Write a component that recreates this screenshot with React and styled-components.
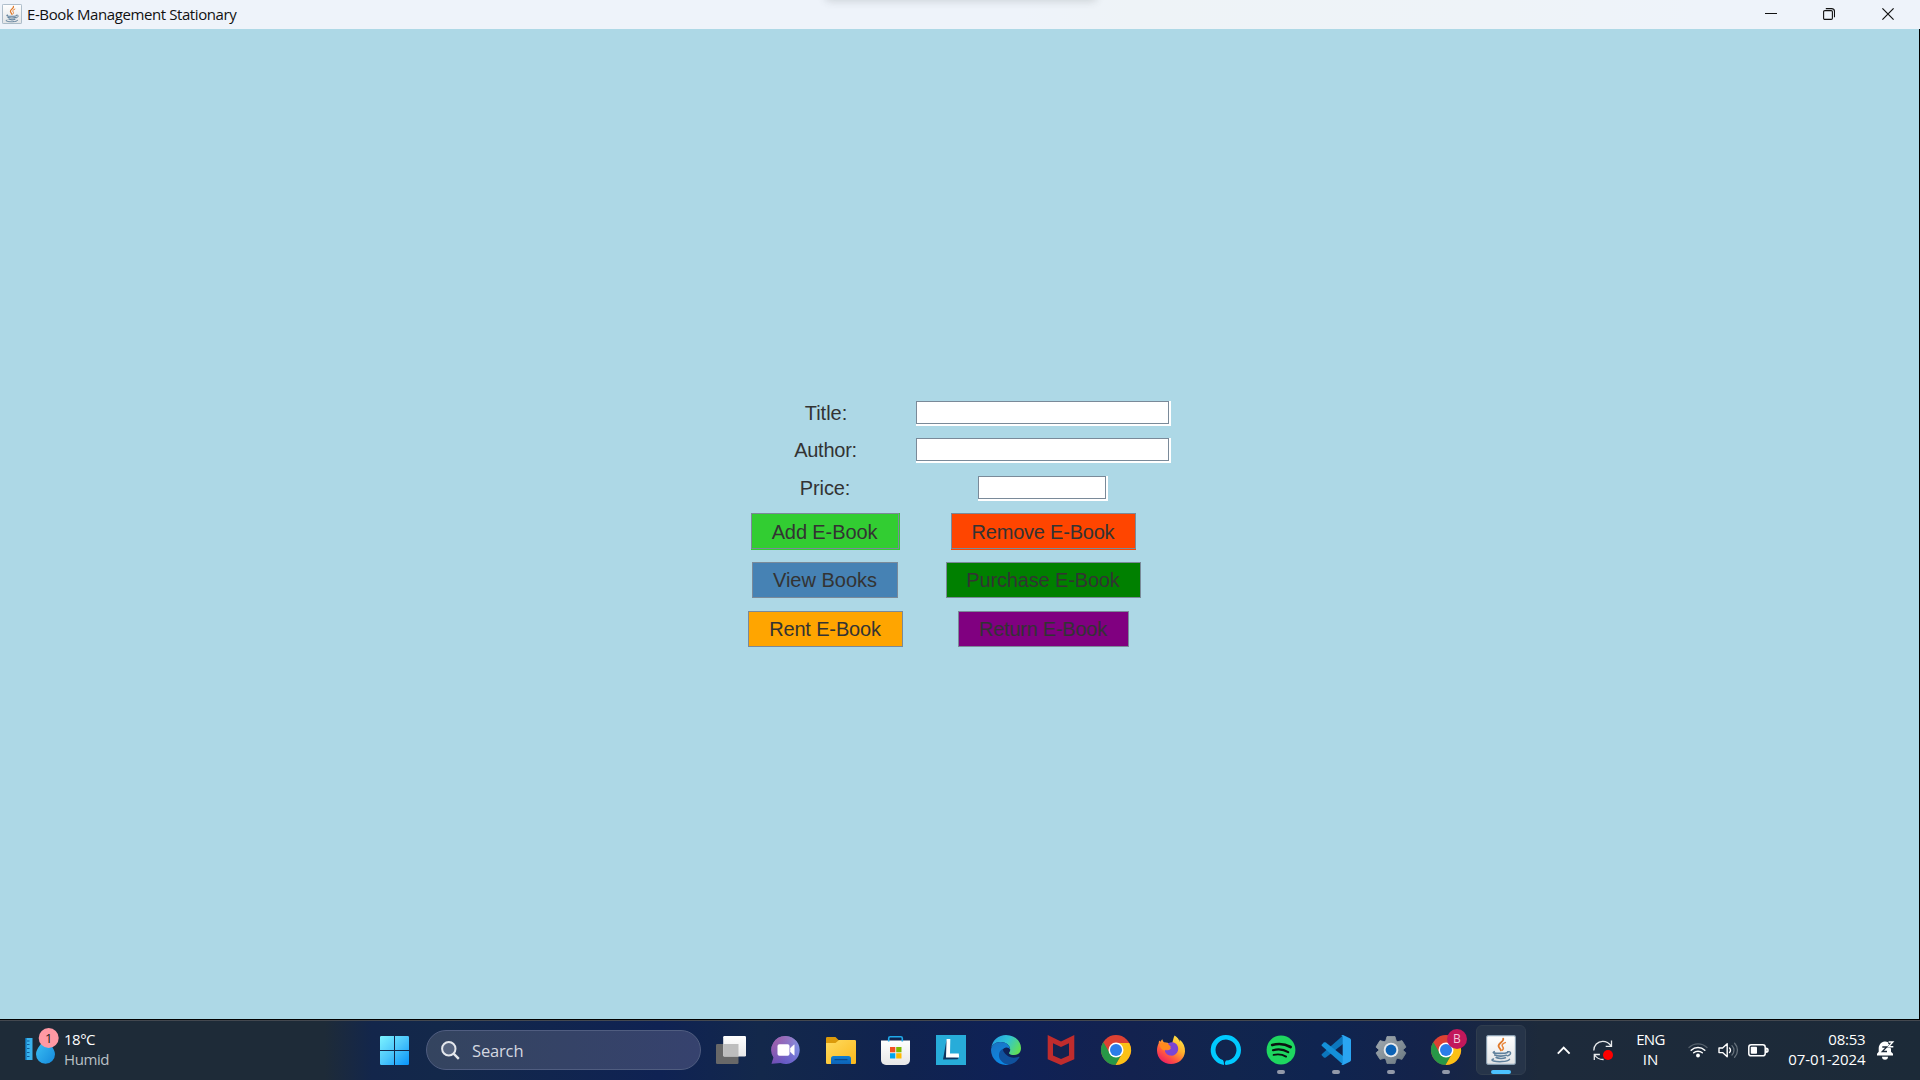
import React from "react";
import styled, { createGlobalStyle } from "styled-components";

const GlobalStyle = createGlobalStyle`
  * { box-sizing: border-box; }
  body { margin: 0; overflow: hidden; background: #000; }
`;

const Screen = styled.div`
  display: flex;
  flex-direction: column;
  width: 1920px;
  height: 1080px;
  font-family: "Open Sans", "Noto Sans", sans-serif;
`;

/* ---------- window ---------- */
const TitleBar = styled.header`
  position: relative;
  overflow: hidden;
  display: flex;
  align-items: center;
  height: 29px;
  flex: none;
  padding: 0 3px 0 2px;
  background: linear-gradient(90deg, #eef3fa 0, #eef3fa 1020px, #eef3f7 1130px, #eef3f8 1500px, #eef3fa 1700px);
`;
const DockShade = styled.div`
  position: absolute;
  left: 826px;
  top: -9px;
  width: 270px;
  height: 9px;
  border-radius: 6px;
  box-shadow: 0 0 9px 1px rgba(60, 70, 70, 0.2);
`;
const AppIcon = styled.svg`
  width: 20px;
  height: 20px;
  margin-bottom: 2px;
`;
const WindowTitle = styled.span`
  margin: 0 auto 1px 5px;
  font-size: 15px;
  line-height: 22px;
  letter-spacing: ${(p) => p.$track};
  white-space: nowrap;
  color: #111;
`;
const WindowButton = styled.button`
  display: flex;
  align-items: center;
  justify-content: center;
  width: 58.5px;
  height: 29px;
  padding: 0 0 1px;
  border: 0;
  background: none;
`;
const ContentPane = styled.main`
  display: flex;
  justify-content: center;
  flex: none;
  width: 1919px;
  height: 990px;
  padding-top: 372px;
  background: #add8e6;
`;
const Form = styled.form`
  display: grid;
  grid-template-columns: 155px 255px;
  grid-template-rows: 37px 38px 37px 49px 49px 36px;
  column-gap: 13px;
  align-items: start;
  justify-items: center;
  height: 246px;
  font-family: "Liberation Sans", Arial, sans-serif;
  font-size: 20px;
  color: #333;
  margin-right: 1px;
`;
const Label = styled.label`
  line-height: 24px;
  padding-left: ${(p) => p.$inset || 0}px;
  letter-spacing: ${(p) => p.$track || "0"};
`;
const FieldFrame = styled.div`
  width: ${(p) => p.$width}px;
  height: 25px;
  border: solid #fff;
  border-width: 0 2px 2px 0;
`;
const Field = styled.input`
  display: block;
  width: 100%;
  height: 100%;
  padding: 0 4px;
  border: 1px solid #7a8a99;
  border-radius: 0;
  background: #fff;
  font: inherit;
  outline: none;
`;
const Action = styled.button`
  display: flex;
  width: ${(p) => p.$width}px;
  height: ${(p) => 36 + (p.$bottom || 0)}px;
  padding: 0 ${(p) => p.$right || 0}px ${(p) => p.$bottom || 0}px 0;
  border: 0;
  background: ${(p) => p.$fill};
  font: inherit;
  color: inherit;
`;
const ActionFace = styled.span`
  flex: 1;
  height: 36px;
  border: 1px solid #7a8a99;
  line-height: ${(p) => (p.$low ? 37 : 35)}px;
  letter-spacing: ${(p) => p.$track || "0"};
  text-align: center;
  white-space: nowrap;
`;

/* ---------- taskbar ---------- */
const Taskbar = styled.footer`
  display: flex;
  flex: none;
  height: 60px;
  margin-top: 1px;
  border-top: 1px solid #44484f;
  background: linear-gradient(90deg, #1e2b38 0, #1e2b38 325px, #13264b 372px, #13284a 440px, #0f2253 660px, #13284b 760px, #10234f 900px, #0f2156 1010px, #13224f 1130px, #11254e 1230px, #0f2450 1320px, #14234a 1430px, #1d2a3b 1540px, #1c2a38 1920px);
`;
const Weather = styled.div`
  display: flex;
  width: 380px;
  padding: 7px 0 0 25px;
`;
const WeatherText = styled.div`
  margin-left: 5px;
  padding-top: 1px;
  font-size: 15px;
  line-height: 20px;
  color: #fff;
`;
const Muted = styled.div`
  color: #b9c0c6;
  letter-spacing: -0.4px;
`;
const Line = styled.div`
  letter-spacing: ${(p) => p.$track || "0"};
`;
const StartButton = styled.div`
  width: 46px;
  padding-top: 15px;
`;
const Search = styled.div`
  display: flex;
  align-items: center;
  width: 275px;
  height: 40px;
  margin-top: 9px;
  padding-left: 14px;
  border: 1px solid #505d80;
  border-radius: 20px;
  background: linear-gradient(90deg, #34445f, #36426e);
  font-size: 16.5px;
  color: #d4d8e0;
`;
const SearchLabel = styled.span`
  margin-left: 12px;
  letter-spacing: -0.15px;
  padding-top: 1px;
`;
const Apps = styled.div`
  display: flex;
  margin-left: 2.5px;
`;
const AppCell = styled.div`
  display: flex;
  flex-direction: column;
  align-items: center;
  width: 50px;
  height: 50px;
  margin: 4px 2.5px 0;
  padding-top: 10px;
  border-radius: 6px;
  border: 1px solid ${(p) => (p.$active ? "#303d4e" : "transparent")};
  background: ${(p) => (p.$active ? "#263449" : "none")};
  svg { flex: none; margin-top: -1px; overflow: visible; }
`;
const Indicator = styled.div`
  width: ${(p) => (p.$active ? 20 : 8)}px;
  height: 4px;
  margin-top: 5px;
  border-radius: 2px;
  background: ${(p) => (p.$active ? "#4cc2ff" : "#9299a9")};
`;
const Tray = styled.div`
  display: flex;
  align-items: flex-start;
  margin-left: 28px;
  color: #fff;
  font-size: 15px;
  line-height: 20px;
  svg { flex: none; overflow: visible; }
`;
const TrayIcon = styled.div`
  display: flex;
  width: ${(p) => p.$width}px;
  margin-left: ${(p) => p.$gap || 0}px;
  padding-top: 19px;
`;
const Language = styled.div`
  width: 50px;
  padding-top: 8px;
  text-align: center;
`;
const Clock = styled.div`
  width: 98px;
  padding-top: 8px;
  text-align: right;
`;
const Bell = styled.div`
  margin-left: 11px;
  padding-top: 19px;
`;

const JavaArt = () => (
  <>
    <rect x="0.6" y="0.6" width="28.8" height="28.8" rx="1.6" fill="url(#javaBg)" stroke="#8ba0b2" strokeWidth="1.1" />
    <g fill="none" strokeLinecap="round">
      <path d="M17.2 3.6c1.2 3-5.4 4.600-4.600 7.600.3 1.500 1.700 2.400 2.300 4.200" stroke="#e0792a" strokeWidth="1.8" />
      <path d="M19.300 7.600c-3.200 1.200-3.900 2.700-2.500 4.300.9 1.100.6 2.300-.6 3.400" stroke="#e8853a" strokeWidth="1.500" />
      <path d="M8.200 16.600c-3 1.500 1.500 1.900 6.500 1.800 4 0 5.800-.4 7-.9" stroke="#5f809c" strokeWidth="1.600" />
      <path d="M8.800 20c2.500 1.400 9 1.300 11.600.3M10.200 22.600c2.400 1.200 7 1.100 9.200.2" stroke="#5f809c" strokeWidth="1.700" />
      <path d="M21.600 16.800c3.800-1 4.200 2.600-.2 4" stroke="#5f809c" strokeWidth="1.400" />
      <path d="M7.500 24c-4.600 1.500 2 2.900 8.500 2.600 4-.2 6.500-.8 7.500-2.200" stroke="#5f809c" strokeWidth="1.500" />
    </g>
  </>
);

const GradientDefs = styled.svg`
  position: absolute;
`;
const Gradients = () => (
  <GradientDefs width="0" height="0">
    <defs>
      <linearGradient id="javaBg" x1="0" y1="0" x2="0" y2="1"><stop offset="0" stopColor="#fff" /><stop offset="1" stopColor="#e2e4e6" /></linearGradient>
      <linearGradient id="winBlue" gradientUnits="userSpaceOnUse" x1="0" y1="0" x2="29" y2="29"><stop offset="0" stopColor="#7cf3ff" /><stop offset="0.5" stopColor="#4cc6fb" /><stop offset="1" stopColor="#0794fb" /></linearGradient>
      <linearGradient id="drop" x1="0" y1="0" x2="1" y2="1"><stop offset="0" stopColor="#3fc4f5" /><stop offset="1" stopColor="#1489dc" /></linearGradient>
      <linearGradient id="chat" x1="0" y1="1" x2="1" y2="0"><stop offset="0" stopColor="#5a46b8" /><stop offset="0.45" stopColor="#7069cd" /><stop offset="1" stopColor="#86a7f1" /></linearGradient>
      <linearGradient id="chatPink" x1="0" y1="0" x2="0.7" y2="0.7"><stop offset="0" stopColor="#a85da4" /><stop offset="1" stopColor="#a85da4" stopOpacity="0" /></linearGradient>
      <linearGradient id="folder" x1="0" y1="0" x2="1" y2="1"><stop offset="0" stopColor="#ffdb60" /><stop offset="1" stopColor="#fbb81b" /></linearGradient>
      <linearGradient id="tray" x1="0" y1="0" x2="0" y2="1"><stop offset="0" stopColor="#0f7fd2" /><stop offset="1" stopColor="#0d62b6" /></linearGradient>
      <linearGradient id="edgeTop" x1="0" y1="0.2" x2="1" y2="0.6"><stop offset="0" stopColor="#229ee4" /><stop offset="0.5" stopColor="#31c4d5" /><stop offset="1" stopColor="#62df55" /></linearGradient>
      <linearGradient id="edgeLeft" x1="0" y1="0" x2="0.4" y2="1"><stop offset="0" stopColor="#1b72c0" /><stop offset="1" stopColor="#0c88e5" /></linearGradient>
      <linearGradient id="fox" x1="0.9" y1="0" x2="0.2" y2="1"><stop offset="0" stopColor="#fff04c" /><stop offset="0.4" stopColor="#ffb02b" /><stop offset="0.7" stopColor="#ff5740" /><stop offset="1" stopColor="#e91667" /></linearGradient>
      <linearGradient id="gear" x1="0" y1="0" x2="1" y2="1"><stop offset="0" stopColor="#a3abb1" /><stop offset="1" stopColor="#697780" /></linearGradient>
      <linearGradient id="viewFront" x1="0" y1="0" x2="0" y2="1"><stop offset="0" stopColor="#fff" /><stop offset="1" stopColor="#e7e7e7" /></linearGradient>
    </defs>
  </GradientDefs>
);

const Art = ({ children, w = 30 }) => (
  <svg width={w} height="30" viewBox={`0 0 ${w} 30`}>{children}</svg>
);

const TaskView = () => (
  <Art>
    <rect x="0" y="9" width="22.500" height="20" rx="1.200" fill="#686868" />
    <rect x="7.200" y="1" width="22.800" height="20.500" rx="1.200" fill="url(#viewFront)" />
    <path d="M7.200 9h15.300v12.500H8.400a1.200 1.200 0 0 1-1.200-1.200z" fill="#bdbdbd" />
  </Art>
);
const Chat = () => (
  <Art>
    <path d="M15 1a14 14 0 1 1-5.500 27L.5 28.800l2-6.300A14 14 0 0 1 15 1z" fill="url(#chat)" />
    <path d="M15 1a14 14 0 1 1-5.500 27L.5 28.800l2-6.300A14 14 0 0 1 15 1z" fill="url(#chatPink)" />
    <rect x="6.500" y="9.200" width="12" height="11.600" rx="1.800" fill="#fff" />
    <path d="M19.500 13l3.700-3.200v10.400L19.500 17z" fill="#fff" stroke="#fff" strokeWidth="0.600" strokeLinejoin="round" />
  </Art>
);
const Explorer = () => (
  <Art>
    <path d="M0 3.200A1.200 1.200 0 0 1 1.200 2h8.300l3 3H28v6H0z" fill="#dc9a0b" />
    <path d="M0 8h9.500L13 5h15.800A1.200 1.200 0 0 1 30 6.200v21.600a1.200 1.200 0 0 1-1.200 1.200H1.200A1.200 1.200 0 0 1 0 27.800z" fill="url(#folder)" />
    <path d="M5 29v-5.500A2.500 2.500 0 0 1 7.500 21h15a2.500 2.500 0 0 1 2.500 2.500V29z" fill="url(#tray)" />
    <path d="M9 24.700h12" stroke="#0b4a8c" strokeWidth="1.200" strokeLinecap="round" />
  </Art>
);
const Store = () => (
  <Art w={30}>
    <path d="M0 5.500h29v19.500a5 5 0 0 1-5 5H5a5 5 0 0 1-5-5z" fill="url(#viewFront)" />
    <path d="M7.700 6.500V3.200A1.500 1.500 0 0 1 9.200 1.700h10.600a1.500 1.500 0 0 1 1.500 1.500v3.300" fill="none" stroke="#1fa9ea" strokeWidth="1.600" />
    <path d="M9 12h5.300v5.300H9z" fill="#f25022" /><path d="M15.200 12h5.300v5.300h-5.300z" fill="#7fba00" />
    <path d="M9 18.200h5.300v5.300H9z" fill="#00a4ef" /><path d="M15.200 18.200h5.300v5.300h-5.300z" fill="#ffb900" />
  </Art>
);
const Lenovo = () => (
  <Art>
    <rect width="30" height="30" fill="#27acd9" />
    <path d="M10.500 5L7 24.500l14.500-.3 1.500-1.700-10-1z" fill="#10355f" />
    <path d="M10.600 4h3.700l-.3 14.500h8.800l.3 4H10z" fill="#fff" />
  </Art>
);
const Edge = () => (
  <Art>
    <path d="M.2 13C1.500 5 7.500 0 15 0c9 0 15 6.500 15 13 0 5-3.500 7-7 7-3 0-5.300-1.200-5-2 .2-.8 1.200-1.300 1.200-3.200C19.200 10 14.500 7 9.500 7 4.500 7 1 10 .2 13z" fill="url(#edgeTop)" />
    <path d="M0 15C.3 10 4.500 7 9.500 7c5.500 0 9.600 3.200 9.700 7.800-1-1.900-2.700-2.500-4.200-2.200-3 .6-4.700 3.300-4.700 6.500 0 4.500 3.500 9.700 7.900 10.500A15 15 0 0 1 0 15z" fill="url(#edgeLeft)" />
    <path d="M12.200 13.800c-4.200 1.500-5.700 6.900-2.700 11.200 2.500 3.700 6.400 5 9.500 4.500 4-.8 7.400-3.700 9.400-7 .4-.6-.1-1-.8-.7-4.100 1.900-8.900 1.200-12-1.700-2.400-2.200-4.200-4.400-3.400-6.300z" fill="#10519d" />
  </Art>
);
const McAfee = () => (
  <Art>
    <path d="M1.700 0L15 6.400 28.300 0v24.300L15 30 1.700 24.300z" fill="#bf2c2d" />
    <path d="M7 8.200L15 12l8-3.800v12.400L15 24l-8-3.400z" fill="#12224f" />
  </Art>
);
const ChromeArt = () => (
  <>
    <circle cx="15" cy="15" r="15" fill="#dd4133" />
    <path d="M15 8h13.270A15 15 0 0 1 14.430 30l6.630-11.500z" fill="#fbc116" />
    <path d="M2.300 7l6.640 11.500L15 15l6.060 3.500L14.430 30A15 15 0 0 1 2.300 7z" fill="#279847" />
    <circle cx="15" cy="15" r="7.500" fill="#fff" />
    <circle cx="15" cy="15" r="6" fill="#2b7de9" />
  </>
);
const Chrome = () => <Art><ChromeArt /></Art>;
const ChromeProfile = () => (
  <Art>
    <ChromeArt />
    <circle cx="26" cy="4" r="10" fill="#c2185b" />
    <text x="26" y="8.200" textAnchor="middle" fontSize="12" fontFamily="Open Sans, sans-serif" fill="#f3c9da">B</text>
  </Art>
);
const Firefox = () => (
  <Art>
    <path d="M18.600.6c3 2 4.500 4 5.200 6.300 0-.8-.1-1.700-.3-2.500 4 3.200 5.800 7.500 5.500 12C28.600 23.400 22.700 29 15 29S1 23.300 1 15.500c0-2.700.6-5.100 1.600-7 .1-1.200.2-2 .6-2.700.7 0 1 .4 1.500 1 .3-1.300.9-2 1.700-2.600.2 1.400.8 2.500 2 3.300 1.700-.3 3.300 0 4.600.8 1.400.9 2.500 1 3.200-.2C17 5.700 17.400 3 18.600.6z" fill="url(#fox)" />
    <path d="M10 10.600c1.600-2.700 4.600-4 7.600-3.200 3.600 1.100 5.200 4.600 4.400 8-.9 3.600-4.200 5.500-7.400 5.200-3.200-.3-5.800-2.600-5.800-5.600 1.700.8 4.500.3 6.400-1.800-2.400.3-4.500-.7-5.200-2.600z" fill="#7a45d4" />
    <path d="M3.800 8.800c3-2.200 7-1.500 9.400 1.200.8.9 1.300 1.700 1.800 1.800-.7 1.700-2.500 2-4.500 2.500-1 .3-1.700.4-1.700 1.400C5.500 15 3.700 12 3.800 8.800z" fill="#ff8a1d" />
  </Art>
);
const Alexa = () => (
  <Art>
    <path d="M15 0a15 15 0 0 1 0 30c-.8-.2-1.200-.6-1.200-1.300 0-1.200.5-2.300 1.200-3.200A10.500 10.500 0 1 0 11.800 25c.7.800 1.200 1.800 1.200 4.900A15 15 0 0 1 15 0z" fill="#00caff" />
  </Art>
);
const Spotify = () => (
  <Art>
    <circle cx="15" cy="15" r="14.400" fill="#1ed760" />
    <g fill="none" stroke="#0b1210" strokeLinecap="round">
      <path d="M6.200 10c6-1.700 13-1 18.400 2" strokeWidth="2.700" />
      <path d="M7 15.200c5-1.400 10.800-.8 15.200 1.900" strokeWidth="2.200" />
      <path d="M7.600 19.900c4.500-1.100 8.800-.5 12.500 1.700" strokeWidth="1.900" />
    </g>
  </Art>
);
const VSCode = () => (
  <Art>
    <path d="M.9 20.600l2 1.800c.7.500 1.300.4 1.900 0L22 9V.4L.9 19c-.5.500-.4 1.200 0 1.600z" fill="#0c76bd" />
    <path d="M.9 9.400l2-1.800c.7-.5 1.300-.4 1.900 0L22 21v8.600L.9 11c-.5-.5-.4-1.200 0-1.600z" fill="#1490d8" />
    <path d="M20 .8c.8-.8 1.700-1 2.600-.6l6.200 3c.8.400 1.200 1 1.200 1.800v20c0 .8-.4 1.400-1.200 1.800l-6.200 3c-.9.400-1.800.2-2.600-.6.800.3 1.700-.2 1.700-1.200V2c0-1-.9-1.500-1.700-1.200z" fill="#2aa5f2" />
  </Art>
);
const Settings = () => (
  <Art>
    <path d="M11 1.500h8l1.200 4.300 1.600.9L26 5.600l4 6.500-3.200 2.900 3.200 2.900-4 6.500-4.200-1.100-1.600.9-1.200 4.300h-8l-1.200-4.300-1.600-.9L4 24.400l-4-6.500L3.200 15 0 12.100l4-6.500 4.200 1.100 1.600-.9z" fill="url(#gear)" stroke="url(#gear)" strokeWidth="0.800" strokeLinejoin="round" />
    <circle cx="15" cy="15" r="7.300" fill="#e6e9eb" />
    <circle cx="15" cy="15" r="5.400" fill="#0c62b5" />
  </Art>
);
const Java = () => <Art><JavaArt /></Art>;

const apps = [
  { id: "taskview", Icon: TaskView },
  { id: "chat", Icon: Chat },
  { id: "explorer", Icon: Explorer },
  { id: "store", Icon: Store },
  { id: "lenovo", Icon: Lenovo },
  { id: "edge", Icon: Edge },
  { id: "mcafee", Icon: McAfee },
  { id: "chrome", Icon: Chrome },
  { id: "firefox", Icon: Firefox },
  { id: "alexa", Icon: Alexa },
  { id: "spotify", Icon: Spotify, running: true },
  { id: "vscode", Icon: VSCode, running: true },
  { id: "settings", Icon: Settings, running: true },
  { id: "chrome-profile", Icon: ChromeProfile, running: true },
  { id: "java", Icon: Java, running: true, active: true },
];

const fields = [
  { label: "Title:", width: 255, inset: 2 },
  { label: "Author:", width: 255, inset: 1, track: "-0.25px" },
  { label: "Price:", width: 130, track: "-0.1px" },
];

const actions = [
  { text: "Add E-Book", width: 149, fill: "#32cd32", right: 1, bottom: 1, track: "-0.1px" },
  { text: "Remove E-Book", width: 185, fill: "#ff4500", bottom: 1, track: "-0.22px" },
  { text: "View Books", width: 146, fill: "#4682b4" },
  { text: "Purchase E-Book", width: 195, fill: "#008000", track: "-0.15px" },
  { text: "Rent E-Book", width: 155, fill: "#ffa500", track: "-0.15px" },
  { text: "Return E-Book", width: 171, fill: "#800080", track: "-0.25px" },
];

export default function App() {
  return (
    <Screen>
      <GlobalStyle />
      <Gradients />
      <TitleBar>
        <DockShade />
        <AppIcon viewBox="0 0 30 30"><JavaArt /></AppIcon>
        <WindowTitle $track="-0.4px">E-Book Management Stationary</WindowTitle>
        <WindowButton>
          <svg width="12" height="12"><path d="M0 5.500h12" stroke="#111" /></svg>
        </WindowButton>
        <WindowButton>
          <svg width="12" height="12" fill="none" stroke="#111" strokeWidth="1.100">
            <rect x="0.600" y="2.600" width="8.800" height="8.800" rx="1.200" />
            <path d="M2.800.6h5.700a3 3 0 0 1 3 3v5.600" />
          </svg>
        </WindowButton>
        <WindowButton>
          <svg width="12" height="12"><path d="M.4.400l11.200 11.200M11.600.400L.4 11.600" stroke="#111" strokeWidth="1.200" /></svg>
        </WindowButton>
      </TitleBar>

      <ContentPane>
        <Form>
          {fields.map((f) => (
            <React.Fragment key={f.label}>
              <Label $inset={f.inset} $track={f.track}>{f.label}</Label>
              <FieldFrame $width={f.width}><Field /></FieldFrame>
            </React.Fragment>
          ))}
          {actions.map((a) => (
            <Action key={a.text} type="button" $width={a.width} $fill={a.fill} $right={a.right} $bottom={a.bottom}>
              <ActionFace $track={a.track} $low={a.bottom}>{a.text}</ActionFace>
            </Action>
          ))}
        </Form>
      </ContentPane>

      <Taskbar>
        <Weather>
          <svg width="34" height="38" viewBox="0 0 34 38">
            <rect x="1" y="10" width="6.500" height="22" fill="#39b3ee" />
            <path d="M1 10v22" stroke="#1580c4" strokeWidth="1.500" />
            <path d="M2 13h2.500M2 16.500h2.500M2 20.500h2.500M2 24.500h2.500M2 28.500h2.500" stroke="#125f9e" strokeWidth="1.200" />
            <path d="M20.500 10c3 4.500 9.500 10.500 9.500 16.300A9.500 9.500 0 0 1 11 26.300C11 20.500 17.500 14.500 20.500 10z" fill="url(#drop)" />
            <circle cx="23.700" cy="10" r="10" fill="#ff99a4" />
            <text x="23.700" y="14.800" textAnchor="middle" fontSize="13" fontFamily="Open Sans, sans-serif" fill="#222">1</text>
          </svg>
          <WeatherText>
            <Line $track="-0.5px">18°C</Line>
            <Muted>Humid</Muted>
          </WeatherText>
        </Weather>
        <StartButton>
          <svg width="29" height="29" fill="url(#winBlue)">
            <path d="M0 1.200A1.200 1.200 0 0 1 1.200 0H14v14H0zM15 0h12.800A1.200 1.200 0 0 1 29 1.200V14H15zM0 15h14v14H1.200A1.200 1.200 0 0 1 0 27.800zM15 15h14v12.800a1.200 1.200 0 0 1-1.200 1.200H15z" />
          </svg>
        </StartButton>
        <Search>
          <svg width="19" height="19" viewBox="0 0 19 19" fill="none" stroke="#e4e7ec" strokeWidth="2">
            <circle cx="7.800" cy="7.800" r="6.700" fill="#56647f" />
            <path d="M12.600 12.600l5.200 5.200" strokeWidth="2.400" />
          </svg>
          <SearchLabel>Search</SearchLabel>
        </Search>
        <Apps>
          {apps.map(({ id, Icon, running, active }) => (
            <AppCell key={id} $active={active}>
              <Icon />
              {running && <Indicator $active={active} />}
            </AppCell>
          ))}
        </Apps>
        <Tray>
          <TrayIcon $width={36}>
            <svg width="14" height="20"><path d="M.8 13.600l5.900-5.900 5.900 5.900" fill="none" stroke="#fff" strokeWidth="1.900" /></svg>
          </TrayIcon>
          <TrayIcon $width={33}>
            <svg width="20" height="22" fill="none" stroke="#e8eaec" strokeWidth="1.300">
              <path d="M.8 10.500C.8 5.500 4.500 1.300 9.700 1.300c3.600 0 6.400 1.600 8.300 4.600M18.500.5v5.800h-5.800" />
              <path d="M1.300 20v-5.500h5.600M1.600 15c2 3.200 5 4.600 9 4.500" />
              <circle cx="15" cy="15" r="5" fill="#f00" stroke="none" />
            </svg>
          </TrayIcon>
          <Language>
            <Line $track="-0.6px">ENG</Line>
            <Line>IN</Line>
          </Language>
          <TrayIcon $width={30} $gap={12}>
            <svg width="20" height="22" fill="none" strokeLinecap="round">
              <path d="M1 7.500a13 13 0 0 1 18 0" stroke="#56616c" strokeWidth="1.300" />
              <path d="M3.200 10.200a10 10 0 0 1 13.600 0" stroke="#fff" strokeWidth="1.500" />
              <path d="M5.700 12.800a6.400 6.400 0 0 1 8.600 0" stroke="#fff" strokeWidth="1.500" />
              <circle cx="10" cy="15.500" r="1.900" fill="#fff" />
            </svg>
          </TrayIcon>
          <TrayIcon $width={30}>
            <svg width="20" height="22" fill="none" strokeLinecap="round">
              <path d="M1 8h3.600l4.600-4.200v13L4.600 12.600H1z" stroke="#fff" strokeWidth="1.400" strokeLinejoin="round" />
              <path d="M11.500 8a3.200 3.200 0 0 1 0 4.600" stroke="#fff" strokeWidth="1.400" />
              <path d="M14 5.600a6.600 6.600 0 0 1 0 9.400M16.600 3.300a10 10 0 0 1 0 14" stroke="#66717b" strokeWidth="1.300" />
            </svg>
          </TrayIcon>
          <TrayIcon $width={20}>
            <svg width="20" height="22">
              <rect x="0.800" y="4.800" width="16.400" height="11" rx="2.400" fill="none" stroke="#fff" strokeWidth="1.500" />
              <rect x="2.800" y="6.800" width="6.200" height="7" rx="0.800" fill="#fff" />
              <path d="M18 8.300a2 2 0 0 1 0 4z" stroke="#fff" strokeWidth="1.500" />
            </svg>
          </TrayIcon>
          <Clock>
            <Line $track="-0.2px">08:53</Line>
            <Line $track="-0.1px">07-01-2024</Line>
          </Clock>
          <Bell>
            <svg width="18" height="22">
              <path d="M0 15.500v-1.800l1.700-2V8A6.500 6.500 0 0 1 11 2.200L14 9v2.700l2 2v1.800zM5 16.800h6a3 3 0 0 1-6 0z" fill="#fff" />
              <path d="M5.300 7h4.400l-4.400 4.500h4.700" fill="none" stroke="#1c2a38" strokeWidth="1.300" />
              <path d="M11.300 2.500h4.200l-3.500 4h3.500" fill="none" stroke="#1c2a38" strokeWidth="2.400" />
              <path d="M11.600 2h4.200l-4.300 4.800h4.800" fill="none" stroke="#fff" strokeWidth="1.400" />
            </svg>
          </Bell>
        </Tray>
      </Taskbar>
    </Screen>
  );
}
